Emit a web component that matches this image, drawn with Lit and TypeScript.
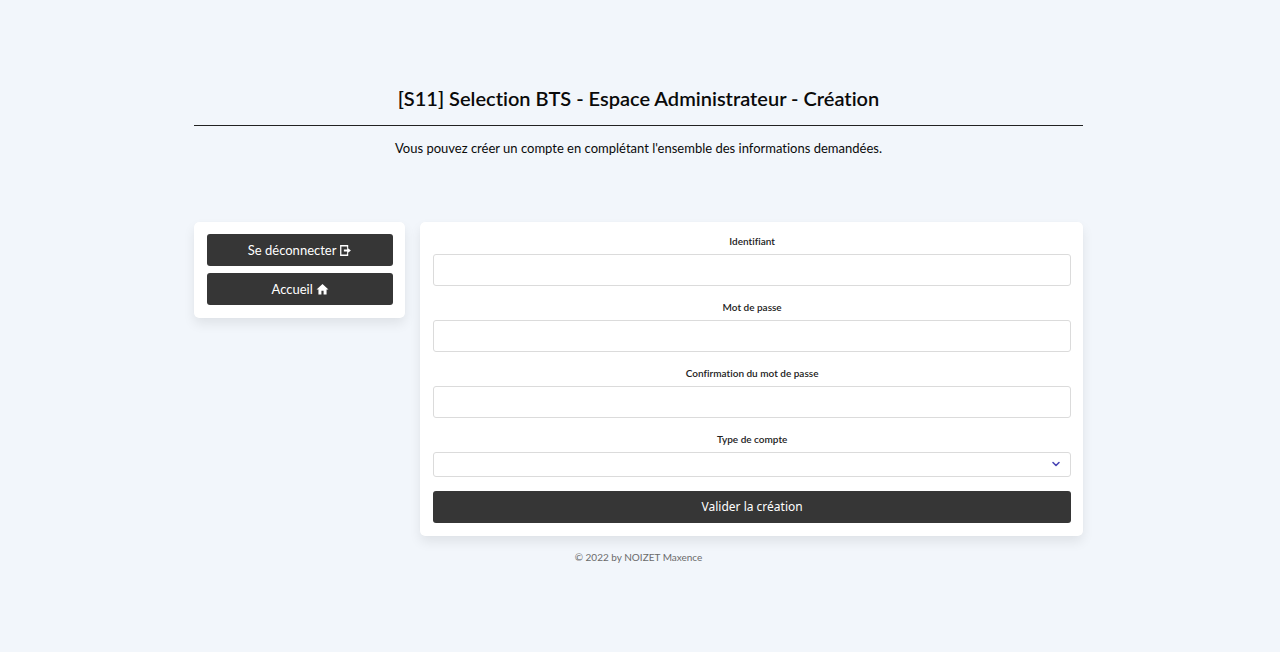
import { LitElement, html, css } from "lit";
import { customElement } from "lit/decorators.js";

@customElement("app-root")
export class AppRoot extends LitElement {
  static styles = css`
    :host {
      display: block;
      box-sizing: border-box;
      min-height: 100vh;
      padding: 84px 19px 24px 16px;
      background: #f2f6fb;
      color: #0a0a0a;
      font-family: Lato, "Open Sans", sans-serif;
      font-size: 13px;
      font-variant-ligatures: none;
      line-height: 20px;
    }
    * {
      box-sizing: border-box;
    }
    .page {
      max-width: 889px;
      margin: 0 auto;
    }
    .header {
      text-align: center;
    }
    .title {
      margin: 0;
      padding-bottom: 13px;
      border-bottom: 1px solid #222;
      font-size: 20px;
      font-weight: 600;
      line-height: 28px;
    }
    .intro {
      margin: 12px 0 0;
      font-size: 13px;
    }
    .columns {
      display: flex;
      align-items: flex-start;
      gap: 15px;
      margin-top: 64px;
    }
    .card {
      padding: 12px 12px 13px 13px;
      border-radius: 5px;
      background: #fff;
      box-shadow: 0 6px 12px rgba(10, 10, 10, 0.08), 0 0 1px rgba(10, 10, 10, 0.04);
    }
    .menu {
      flex: 0 0 calc(25% - 11px);
      display: grid;
      gap: 7px;
    }
    .form {
      flex: 1;
      min-width: 0;
      display: grid;
      gap: 14px;
    }
    .button {
      display: flex;
      align-items: center;
      justify-content: center;
      gap: 3px;
      width: 100%;
      height: 32px;
      padding: 0 12px;
      border: 0;
      border-radius: 3px;
      background: #363636;
      color: #fff;
      font: inherit;
      text-decoration: none;
      cursor: pointer;
    }
    .submit {
      font-family: "Noto Sans", sans-serif;
      font-size: 12px;
    }
    .icon {
      display: block;
      width: 13px;
      height: 13px;
      fill: currentColor;
    }
    .field {
      display: grid;
      gap: 6px;
    }
    .label {
      color: #222;
      font-size: 10px;
      font-weight: 600;
      line-height: 14px;
      text-align: center;
    }
    .input {
      width: 100%;
      height: 32px;
      margin: 0;
      padding: 0 10px;
      border: 1px solid #dbdbdb;
      border-radius: 3px;
      background: #fff;
      color: #363636;
      font: inherit;
    }
    .select-box {
      position: relative;
    }
    .select {
      display: block;
      height: 25px;
      appearance: none;
      font-size: 10px;
    }
    .chevron {
      position: absolute;
      top: 7px;
      right: 10px;
      width: 10px;
      height: 10px;
      fill: none;
      stroke: #4a46b5;
      stroke-width: 1.600;
      stroke-linecap: round;
      stroke-linejoin: round;
      pointer-events: none;
    }
    .footer {
      margin-top: 13px;
      color: #6b6b6b;
      font-size: 10px;
      line-height: 16px;
      text-align: center;
    }
    @media (max-width: 700px) {
      .columns {
        flex-direction: column;
        align-items: stretch;
      }
      .menu,
      .form {
        flex: none;
      }
    }
  `;

  private textField(id: string, label: string, type: string) {
    return html`
      <div class="field">
        <label class="label" for=${id}>${label}</label>
        <input class="input" id=${id} name=${id} type=${type} />
      </div>
    `;
  }

  render() {
    return html`
      <main class="page">
        <header class="header">
          <h1 class="title">[S11] Selection BTS - Espace Administrateur - Création</h1>
          <p class="intro">Vous pouvez créer un compte en complétant l'ensemble des informations demandées.</p>
        </header>
        <div class="columns">
          <nav class="card menu">
            <a class="button" href="#logout">
              Se déconnecter
              <svg class="icon" viewBox="0 0 24 24" aria-hidden="true">
                <path d="M2 2h15v5h-2.400V4.400H4.400v15.200h10.200V17H17v5H2zM9 10.200h6V6.500l7 5.500-7 5.500v-3.700H9z" />
              </svg>
            </a>
            <a class="button" href="#home">
              Accueil
              <svg class="icon" viewBox="0 0 24 24" aria-hidden="true">
                <path d="M12 2 1 12h3.500v9h5.500v-6.500h4V21h5.500v-9H23z" />
              </svg>
            </a>
          </nav>
          <form class="card form" @submit=${(e: Event) => e.preventDefault()}>
            ${this.textField("identifiant", "Identifiant", "text")}
            ${this.textField("password", "Mot de passe", "password")}
            ${this.textField("confirmation", "Confirmation du mot de passe", "password")}
            <div class="field">
              <label class="label" for="type">Type de compte</label>
              <div class="select-box">
                <select class="input select" id="type" name="type">
                  <option value=""></option>
                </select>
                <svg class="chevron" viewBox="0 0 10 10" aria-hidden="true">
                  <path d="M2 3.500 5 6.500 8 3.500" />
                </svg>
              </div>
            </div>
            <button class="button submit" type="submit">Valider la création</button>
          </form>
        </div>
        <footer class="footer">© 2022 by NOIZET Maxence</footer>
      </main>
    `;
  }
}
